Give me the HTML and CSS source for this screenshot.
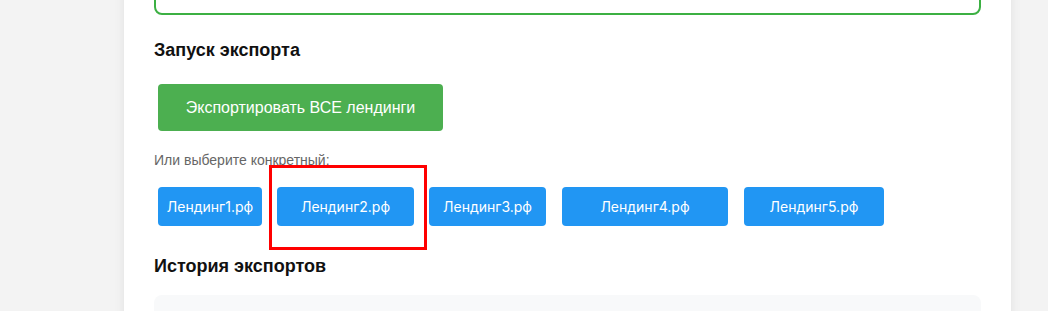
FILE: index.html
```html
<!DOCTYPE html>
<html lang="ru">
<head>
  <meta charset="UTF-8" />
  <meta name="viewport" content="width=device-width, initial-scale=1.0" />
  <title>Экспорт лендингов</title>
  <link rel="stylesheet" href="styles.css">
</head>
<body>

<div class="container">
  <!-- Status from previous check -->
  <div class="status-box"></div>

  <h3>Запуск экспорта</h3>
  <button class="export-all">Экспортировать ВСЕ лендинги</button>

  <p class="hint">Или выберите конкретный:</p>
  <div class="landing-list">
    <button class="landing-button w1">Лендинг1.рф</button>
    <button class="landing-button w2">Лендинг2.рф</button>
    <button class="landing-button w3">Лендинг3.рф</button>
    <button class="landing-button w4">Лендинг4.рф</button>
    <button class="landing-button w5">Лендинг5.рф</button>
    <div class="highlight"></div>
  </div>

  <h3 class="history-title">История экспортов</h3>
  <div class="history-box"></div>
</div>

</body>
</html>
```

FILE: styles.css
```css
body {
  font-family: 'Liberation Sans', Arial, sans-serif;
  background-color: #f3f3f3;
  color: #111;
  margin: 0;
  overflow: hidden;
}

.container {
  width: 827px;
  margin-left: 124px;
  padding: 0 30px;
  background: #fff;
  min-height: 100vh;
  box-shadow: 0 0 10px rgba(0, 0, 0, 0.08);
}

.status-box {
  height: 40px;
  margin-top: -29px;
  border: 2px solid #3cb043;
  border-radius: 8px;
}

h3 {
  font-size: 18px;
  font-weight: bold;
  margin: 25px 0 19px;
}

.export-all {
  background-color: #4caf50;
  color: #fff;
  border: none;
  border-radius: 4px;
  font-family: inherit;
  font-size: 16px;
  width: 285px;
  height: 47px;
  margin: 4px;
  cursor: pointer;
}

.hint {
  font-size: 14px;
  color: #666;
  margin: 17px 0 0;
}

.landing-list {
  position: relative;
  display: flex;
  gap: 15px;
  padding-left: 4px;
  margin-top: 19px;
}

.landing-button {
  background-color: #2196f3;
  color: #fff;
  border: none;
  border-radius: 4px;
  font-family: 'Inter', 'Liberation Sans', sans-serif;
  font-size: 14px;
  height: 39px;
  padding: 0;
  cursor: pointer;
}

.w1 { width: 104px; }
.w2 { width: 137px; }
.w3 { width: 117px; }
.w4 { width: 166px; margin-left: 1px; }
.w5 { width: 140px; margin-left: 1px; }

/* annotation frame around the second button */
.highlight {
  position: absolute;
  left: 115px;
  top: -22px;
  width: 152px;
  height: 79px;
  border: 3px solid #f00;
}

.history-title {
  margin: 30px 0 18px;
}

.history-box {
  background: #f8f9fa;
  border-radius: 8px;
  height: 120px;
}
```
